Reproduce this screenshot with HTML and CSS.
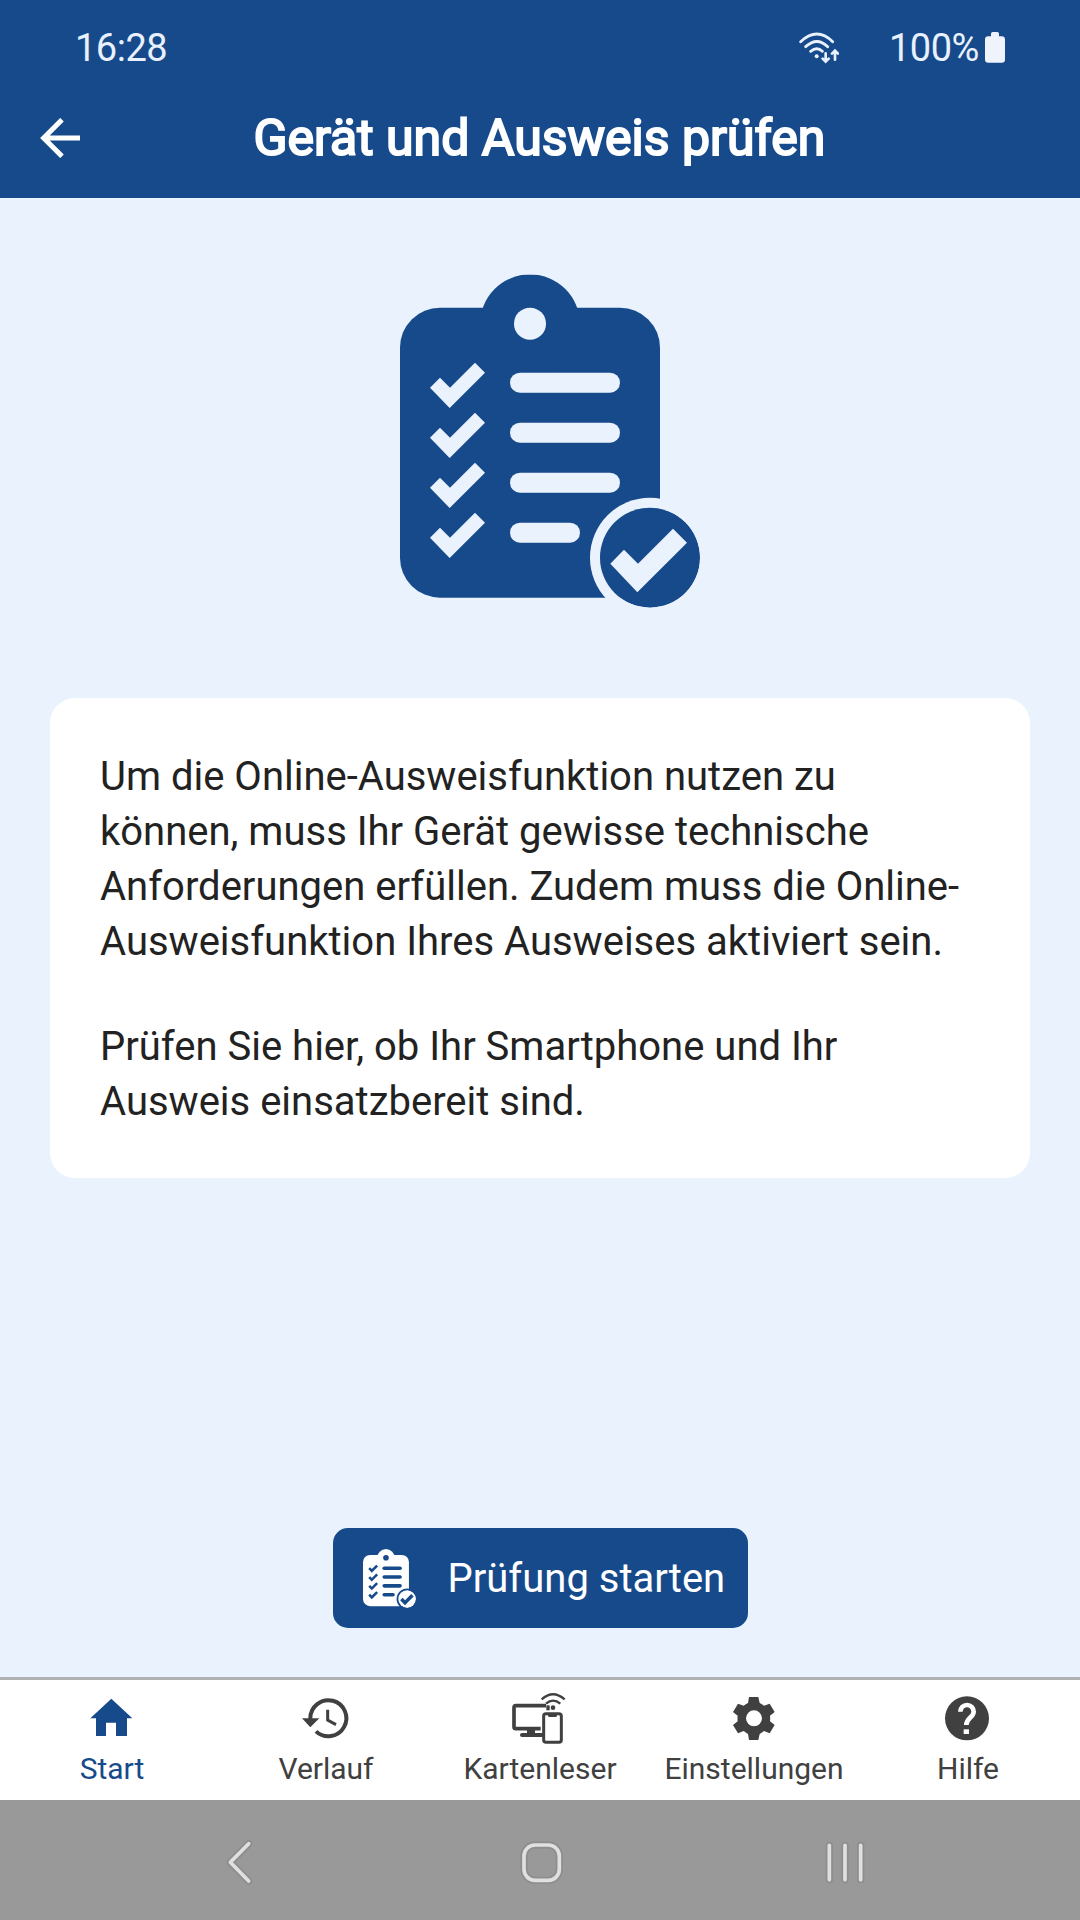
FILE: index.html
```html
<!DOCTYPE html>
<html lang="de">
<head>
<meta charset="utf-8">
<title>Gerät und Ausweis prüfen</title>
<link rel="stylesheet" href="styles.css">
</head>
<body>
<svg class="defs" aria-hidden="true">
  <defs>
    <path id="check" d="M150 384L180 354L210 384L285 309L315 339L209 445Z"/>
    <mask id="clipboard-mask" maskUnits="userSpaceOnUse" x="60" y="44" width="902" height="1002">
      <rect x="60" y="44" width="902" height="1002" fill="#fff"/>
      <circle cx="450" cy="192" r="48"/>
      <use href="#check"/>
      <use href="#check" y="150"/>
      <use href="#check" y="300"/>
      <use href="#check" y="450"/>
      <rect x="390" y="339" width="330" height="60" rx="30"/>
      <rect x="390" y="489" width="330" height="60" rx="30"/>
      <rect x="390" y="639" width="330" height="60" rx="30"/>
      <rect x="390" y="789" width="210" height="60" rx="30"/>
      <circle cx="810" cy="894" r="180"/>
      <circle cx="810" cy="894" r="150" fill="#fff"/>
      <path d="M691 912L732 870L774 912L879 807L921 849L772 998Z"/>
    </mask>
    <symbol id="checklist" viewBox="60 44 900 1000">
      <g mask="url(#clipboard-mask)" fill="currentColor">
        <rect x="60" y="144" width="780" height="870" rx="120"/>
        <circle cx="450" cy="194" r="150"/>
        <circle cx="810" cy="894" r="150"/>
      </g>
    </symbol>
  </defs>
</svg>
<div class="screen">
  <header class="header">
    <div class="status">
      <span class="status-time">16:28</span>
      <svg class="status-wifi" viewBox="0 0 120 96" fill="none" stroke="currentColor" stroke-width="8.5" stroke-linecap="round">
        <path d="M5 29Q54-17 101 29M20 44Q54 13 86 44M35 58Q54 43 70 58"/>
        <circle cx="53" cy="73" r="6" fill="currentColor" stroke="none"/>
        <path d="M80 64V88M71 80L80 89L89 80M108 83V56M99 65L108 56L117 65" stroke-width="8"/>
      </svg>
      <span class="status-level">100%</span>
      <svg class="status-battery" viewBox="0 0 60 93" fill="currentColor"><path d="M18 13V5Q18 0 23 0H37Q42 0 42 5V13H50Q60 13 60 23V83Q60 92 50 92H10Q0 92 0 83V23Q0 13 10 13Z"/></svg>
    </div>
    <div class="titlebar">
      <svg class="back" viewBox="0 0 120 120" fill="none" stroke="currentColor" stroke-width="15"><path d="M121 60H12M66 5L11 60L66 115"/></svg>
      <h1 class="title">Gerät und Ausweis prüfen</h1>
    </div>
  </header>
  <main class="content">
    <svg class="illustration"><use href="#checklist"/></svg>
    <section class="card">
      <p>Um die Online-Ausweisfunktion nutzen zu<br>können, muss Ihr Gerät gewisse technische<br>Anforderungen erfüllen. Zudem muss die Online-<br>Ausweisfunktion Ihres Ausweises aktiviert sein.</p>
      <p>Prüfen Sie hier, ob Ihr Smartphone und Ihr<br>Ausweis einsatzbereit sind.</p>
    </section>
    <button class="start"><svg class="start-icon"><use href="#checklist"/></svg><span class="start-label">Prüfung starten</span></button>
  </main>
  <nav class="tabs">
    <a class="tab tab-active">
      <svg class="tab-icon" viewBox="246 90 180 168" fill="currentColor"><path d="M334 116L397 175H381V228H348V188H318V228H288V175H271Z"/></svg>
      <span>Start</span>
    </a>
    <a class="tab">
      <svg class="tab-icon" viewBox="888 90 180 168"><path d="M931 178V175A54 54 0 1 1 948 214" fill="none" stroke="currentColor" stroke-width="12"/><path d="M906 175H958L931 202Z" fill="currentColor"/><path d="M983 149V180L1008 194" fill="none" stroke="currentColor" stroke-width="9"/></svg>
      <span>Verlauf</span>
    </a>
    <a class="tab">
      <svg class="tab-icon" viewBox="330 90 180 168" fill="none" stroke="currentColor">
        <path d="M438 137H348Q342 137 342 143V200Q342 206 348 206H422" stroke-width="11"/>
        <path d="M366 225H425" stroke-width="12" stroke-linecap="round"/>
        <path d="M381 210H405V220H381Z" fill="currentColor" stroke="none"/>
        <path d="M439 136H449V151H439Z" fill="currentColor" stroke="none"/>
        <rect x="431" y="161" width="53" height="86" rx="7" stroke-width="9"/>
        <path d="M444 160H471V167Q471 171 466 171H449Q444 171 444 167Z" fill="currentColor" stroke="none"/>
        <circle cx="459" cy="143" r="7" fill="currentColor" stroke="none"/>
        <path d="M438 131Q459 113 481 131M425 118Q459 87 494 118" stroke-width="7"/>
      </svg>
      <span>Kartenleser</span>
    </a>
    <a class="tab">
      <svg class="tab-icon" viewBox="-48 90 180 168" fill="currentColor"><path fill-rule="evenodd" d="M27 111H55L59 129Q66 132 72 137L89 131L104 156L90 167Q91 175 90 184L104 195L89 220L72 213Q66 218 59 222L55 240H27L24 222Q17 218 11 213L-6 220L-21 195L-7 184Q-8 175 -7 167L-21 156L-6 131L11 137Q17 132 24 129ZM42 151A24 24 0 1 0 42 199A24 24 0 1 0 42 151Z"/></svg>
      <span>Einstellungen</span>
    </a>
    <a class="tab">
      <svg class="tab-icon" viewBox="594 90 180 168"><circle cx="681" cy="175" r="66" fill="currentColor"/><path d="M661 155A20 20 0 0 1 701 155C701 172 679 174 679 195" fill="none" stroke="#fff" stroke-width="14"/><path d="M671 208H687V222H671Z" fill="#fff"/></svg>
      <span>Hilfe</span>
    </a>
  </nav>
  <div class="sysnav">
    <svg class="sys-icon" viewBox="0 0 150 150" fill="none" stroke-linecap="round" stroke-linejoin="round"><path class="halo" d="M104 20L49 76L104 132"/><path class="line" d="M104 20L49 76L104 132"/></svg>
    <svg class="sys-icon" viewBox="0 0 150 150" fill="none"><rect class="halo" x="21" y="24" width="106" height="106" rx="33"/><rect class="line" x="21" y="24" width="106" height="106" rx="33"/></svg>
    <svg class="sys-icon" viewBox="0 0 150 150" fill="none" stroke-linecap="round"><path class="halo" d="M28 25V128M75 25V128M122 25V128"/><path class="line" d="M28 25V128M75 25V128M122 25V128"/></svg>
  </div>
</div>
</body>
</html>
```
FILE: styles.css
```css
* { box-sizing: border-box; }
body { margin: 0; font-family: Roboto, "Liberation Sans", sans-serif; }
.defs { position: absolute; width: 0; height: 0; }
.screen {
  display: flex;
  flex-direction: column;
  width: 1080px;
  height: 1920px;
  background: #eaf3fd;
}
.header { height: 198px; background: #174a8b; color: #fff; }
.status {
  display: flex;
  align-items: flex-start;
  height: 98px;
  padding: 26px 74px 0 75px;
  color: #e8f1fd;
  font-size: 38px;
  line-height: 45px;
}
.status-time { width: 724px; letter-spacing: -0.5px; }
.status-wifi { width: 40px; height: 32px; margin-top: 6px; }
.status-level { width: 96px; margin-left: 50px; letter-spacing: -0.5px; }
.status-battery { width: 20px; height: 31px; margin-top: 6px; color: #eff3fb; }
.titlebar { display: flex; align-items: center; padding: 0 40px; }
.back { width: 40px; height: 40px; }
.title {
  flex: 1;
  margin: 0 41px 0 0;
  padding-top: 1px;
  text-align: center;
  font-size: 50px;
  font-weight: 400;
  line-height: 79px;
  -webkit-text-stroke: 2px #fff;
}
.content {
  display: flex;
  flex: 1;
  flex-direction: column;
  align-items: center;
  padding: 76px 50px 49px;
}
.illustration { width: 300px; height: 334px; margin-left: 20px; color: #174a8b; }
.card {
  width: 980px;
  height: 480px;
  margin-top: 90px;
  padding: 51px 50px 49px;
  border-radius: 25px;
  background: #fff;
  color: #222;
  font-size: 40px;
  line-height: 55px;
  white-space: nowrap;
}
.card p { margin: 0 0 50px; }
.start {
  display: flex;
  align-items: center;
  width: 415px;
  height: 100px;
  margin-top: auto;
  padding: 0 0 0 30px;
  border: 0;
  border-radius: 15px;
  background: #174a8b;
  color: #fff;
  font: 40px/50px Roboto, "Liberation Sans", sans-serif;
}
.start-icon { width: 53px; height: 59px; }
.start-label { margin-left: 32px; padding-top: 2px; white-space: nowrap; }
.tabs {
  display: flex;
  height: 123px;
  padding: 10px 5px 0;
  border-top: 3px solid #b0b1b3;
  background: #fff;
  color: #404040;
}
.tab {
  display: flex;
  flex: 1;
  flex-direction: column;
  align-items: center;
  font-size: 30px;
  line-height: 46px;
}
.tab-active { color: #174a8b; }
.tab-icon { width: 60px; height: 56px; }
.sysnav {
  display: flex;
  justify-content: space-between;
  height: 120px;
  padding: 37px 210px 0 214px;
  background: #999;
}
.sys-icon { width: 50px; height: 50px; }
.halo { stroke: #8e8e8e; stroke-width: 22px; }
.line { stroke: #e0e0e0; stroke-width: 11px; }
```
